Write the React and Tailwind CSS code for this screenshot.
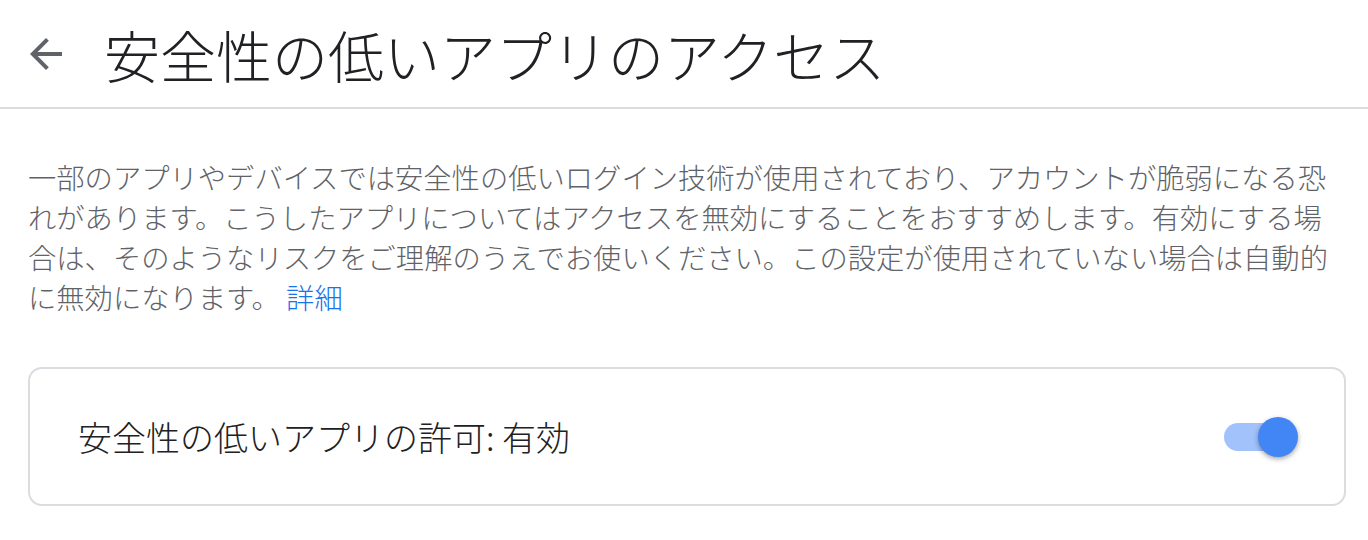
export default function App() {
  const font = { fontFamily: '"Noto Sans CJK JP", "Noto Sans", sans-serif' };
  return (
    <div className="w-[1368px] h-[540px] bg-white overflow-hidden" style={font}>
      <div className="h-[109px] flex items-center border-b-2 border-[#dadce0]">
        <svg className="ml-[22px] w-[48px] h-[48px]" viewBox="0 0 24 24" fill="#5f6368">
          <path d="M20 11H7.83l5.59-5.59L12 4l-8 8 8 8 1.41-1.41L7.83 13H20v-2z" />
        </svg>
        <h1 className="ml-[34px] text-[56px] leading-none text-[#202124] font-light">安全性の低いアプリのアクセス</h1>
      </div>
      <div className="pl-[28px] pr-[22px]">
        <p className="mt-[48px] text-[28.3px] leading-[40px] text-[#5f6368] whitespace-nowrap font-light">
          一部のアプリやデバイスでは安全性の低いログイン技術が使用されており、アカウントが脆弱になる恐
          <br />
          れがあります。こうしたアプリについてはアクセスを無効にすることをおすすめします。有効にする場
          <br />
          合は、そのようなリスクをご理解のうえでお使いください。この設定が使用されていない場合は自動的
          <br />
          に無効になります。 <span className="text-[#1a73e8]">詳細</span>
        </p>
        <div className="mt-[50px] h-[139px] border-2 border-[#dadce0] rounded-[14px] flex items-center justify-between pl-[48px] pr-[46px]">
          <span className="text-[34px] text-[#202124] font-light">安全性の低いアプリの許可: 有効</span>
          <div className="relative w-[74px] h-[40px] flex items-center">
            <div className="w-[70px] h-[28px] rounded-full bg-[#a1c2fa]" />
            <div className="absolute right-0 top-0 w-[40px] h-[40px] rounded-full bg-[#4285f4] shadow-[0_2px_5px_rgba(0,0,0,0.35)]" />
          </div>
        </div>
      </div>
    </div>
  );
}
